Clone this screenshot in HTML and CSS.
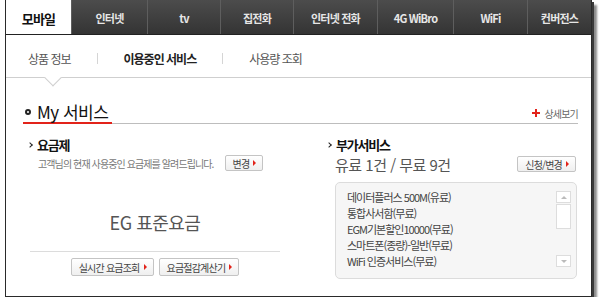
FILE: index.html
```html
<!DOCTYPE html>
<html lang="ko">
<head>
    <meta charset="UTF-8">
    <title>My 서비스</title>
    <link rel="stylesheet" href="styles.css">
</head>
<body>
    <div class="frame">
        <div class="gnb">
            <a class="tab on" style="width:65px">모바일</a>
            <a class="tab" style="width:76px">인터넷</a>
            <a class="tab" style="width:73px">tv</a>
            <a class="tab" style="width:73px">집전화</a>
            <a class="tab" style="width:84px">인터넷 전화</a>
            <a class="tab" style="width:76px">4G WiBro</a>
            <a class="tab" style="width:74px">WiFi</a>
            <a class="tab last">컨버전스</a>
        </div>

        <div class="subnav">
            <a>상품 정보</a>
            <span class="bar"></span>
            <a class="on">이용중인 서비스</a>
            <span class="bar"></span>
            <a>사용량 조회</a>
        </div>

        <div class="content">
            <div class="svc-head">
                <h2><span class="dot"></span>My 서비스</h2>
                <a class="more">
                    <svg width="8" height="8" viewBox="0 0 8 8"><path d="M3 0h2v3h3v2H5v3H3V5H0V3h3z" fill="#e2231a"/></svg>
                    상세보기
                </a>
            </div>

            <div class="cols">
                <section class="col-left">
                    <h3><span class="arr"></span>요금제</h3>
                    <div class="desc">
                        <span>고객님의 현재 사용중인 요금제를 알려드립니다.</span>
                        <button class="btn">변경<i></i></button>
                    </div>
                    <div class="plan">EG 표준요금</div>
                    <div class="plan-btns">
                        <button class="btn">실시간 요금조회<i></i></button>
                        <button class="btn">요금절감계산기<i></i></button>
                    </div>
                </section>

                <section class="col-right">
                    <h3><span class="arr"></span>부가서비스</h3>
                    <div class="count">
                        <span>유료 1건 / 무료 9건</span>
                        <button class="btn">신청/변경<i></i></button>
                    </div>
                    <div class="listbox">
                        <ul>
                            <li>데이터플러스 500M(유료)</li>
                            <li>통합사서함(무료)</li>
                            <li>EGM기본할인10000(무료)</li>
                            <li>스마트폰(종량)-일반(무료)</li>
                            <li>WiFi 인증서비스(무료)</li>
                        </ul>
                        <div class="scroll">
                            <span class="sb up"></span>
                            <span class="thumb"></span>
                            <span class="sb down"></span>
                        </div>
                    </div>
                </section>
            </div>
        </div>
    </div>
</body>
</html>
```

FILE: styles.css
```css
* {
    margin: 0;
    padding: 0;
    box-sizing: border-box;
}

body {
    font-family: "Noto Sans CJK KR", "Liberation Sans", sans-serif;
    background-color: #fff;
    color: #333;
}

.frame {
    margin-left: 5px;
    width: 587px;
    height: 297px;
    border: 1px solid #2a2a2a;
    border-top: none;
    box-shadow: 2px 2px 0 #3a3a3a, 5px 5px 2px rgba(0, 0, 0, 0.45);
    background-color: #fff;
}

/* 상단 대메뉴 */
.gnb {
    display: flex;
    height: 35px;
    background: linear-gradient(#4c4c4c, #343434);
    border-bottom: 1px solid #222;
}

.gnb .tab {
    display: flex;
    align-items: center;
    justify-content: center;
    padding-top: 2px;
    color: #e6e6e6;
    font-size: 11px;
    font-weight: bold;
    letter-spacing: -0.8px;
    border-left: 1px solid #5e5e5e;
}

.gnb .tab.on {
    background-color: #fff;
    color: #111;
    font-size: 13px;
    border-left: none;
}

.gnb .tab.last {
    flex: 1;
}

/* 서브메뉴 */
.subnav {
    position: relative;
    display: flex;
    align-items: center;
    gap: 26px;
    height: 44px;
    padding: 5px 0 0 22px;
    margin-top: -1px;
    border-bottom: 1px solid #cfcfcf;
    font-size: 12px;
    letter-spacing: -1px;
    color: #555;
}

.subnav .on {
    font-weight: bold;
    color: #222;
}

.subnav .bar {
    width: 1px;
    height: 11px;
    background-color: #d5d5d5;
}

.subnav::after {
    content: "";
    position: absolute;
    left: 41px;
    top: 38px;
    width: 11px;
    height: 11px;
    background-color: #fff;
    border-right: 1px solid #cfcfcf;
    border-bottom: 1px solid #cfcfcf;
    transform: rotate(45deg);
}

.content {
    padding: 0 13px 0 17px;
}

/* My 서비스 타이틀 */
.svc-head {
    display: flex;
    justify-content: space-between;
    align-items: center;
    margin-top: 24px;
    border-bottom: 1px solid #bdbdbd;
}

.svc-head h2 {
    display: flex;
    align-items: center;
    gap: 6px;
    height: 22px;
    padding-right: 4px;
    font-size: 17px;
    font-weight: normal;
    line-height: 20px;
    color: #111;
    letter-spacing: -0.5px;
    border-bottom: 2px solid #e2231a;
    margin-bottom: -1px;
}

.svc-head .dot {
    width: 6px;
    height: 6px;
    border: 2px solid #222;
    border-radius: 50%;
    margin-left: 2px;
}

.svc-head .more {
    display: flex;
    align-items: center;
    gap: 4px;
    font-size: 10px;
    letter-spacing: -0.8px;
    color: #666;
    padding-top: 1px;
}

.cols {
    display: flex;
    gap: 35px;
    margin-top: 12px;
}

.col-left {
    width: 264px;
}

.col-right {
    flex: 1;
}

h3 {
    display: flex;
    align-items: center;
    gap: 4px;
    padding-left: 5px;
    font-size: 13px;
    line-height: 18px;
    letter-spacing: -1.2px;
    color: #111;
}

h3 .arr {
    width: 4px;
    height: 4px;
    border-top: 1.5px solid #222;
    border-right: 1.5px solid #222;
    transform: rotate(45deg);
    margin-right: 1px;
}

/* 버튼 */
.btn {
    display: inline-flex;
    align-items: center;
    gap: 4px;
    height: 16px;
    padding: 0 6px 0 7px;
    border: 1px solid #c4c4c4;
    border-radius: 2px;
    background: linear-gradient(#fff, #efefef);
    font-family: inherit;
    font-size: 10px;
    letter-spacing: -0.8px;
    color: #444;
}

.btn i {
    width: 0;
    height: 0;
    border-left: 3px solid #e2231a;
    border-top: 3px solid transparent;
    border-bottom: 3px solid transparent;
}

.desc {
    display: flex;
    align-items: center;
    height: 16px;
    margin-top: 1px;
    padding-left: 15px;
    font-size: 10px;
    letter-spacing: -0.9px;
    color: #777;
}

.desc .btn {
    margin-left: 11px;
}

.plan {
    margin-top: 40px;
    text-align: center;
    font-size: 18px;
    line-height: 22px;
    letter-spacing: -0.5px;
    color: #555;
}

.plan-btns {
    display: flex;
    justify-content: center;
    gap: 5px;
    margin: 18px 7px 0;
    padding-top: 6px;
    border-top: 1px solid #dcdcdc;
}

.plan-btns .btn {
    height: 18px;
}

/* 부가서비스 */
.count {
    display: flex;
    justify-content: space-between;
    align-items: center;
    height: 18px;
    margin-top: 1px;
    padding-left: 13px;
    padding-right: 2px;
    font-size: 15px;
    letter-spacing: -0.5px;
    color: #555;
}

.listbox {
    display: flex;
    height: 97px;
    margin: 9px 1px 0 13px;
    padding: 6px 5px 0 11px;
    border: 1px solid #dcdcdc;
    border-radius: 5px;
    background-color: #f6f6f6;
}

.listbox ul {
    flex: 1;
    list-style: none;
    font-size: 11px;
    line-height: 16px;
    letter-spacing: -1px;
    color: #444;
}

.scroll {
    display: flex;
    flex-direction: column;
    width: 15px;
    height: 76px;
    margin-top: 2px;
}

.scroll .sb {
    display: flex;
    align-items: center;
    justify-content: center;
    height: 12px;
    border: 1px solid #ddd;
    background-color: #fff;
}

.scroll .sb::before {
    content: "";
    border-left: 3px solid transparent;
    border-right: 3px solid transparent;
}

.scroll .up::before {
    border-bottom: 3px solid #bbb;
}

.scroll .down {
    margin-top: auto;
}

.scroll .down::before {
    border-top: 3px solid #bbb;
}

.scroll .thumb {
    height: 25px;
    margin-top: 1px;
    border: 1px solid #ddd;
    background-color: #fff;
}
```
